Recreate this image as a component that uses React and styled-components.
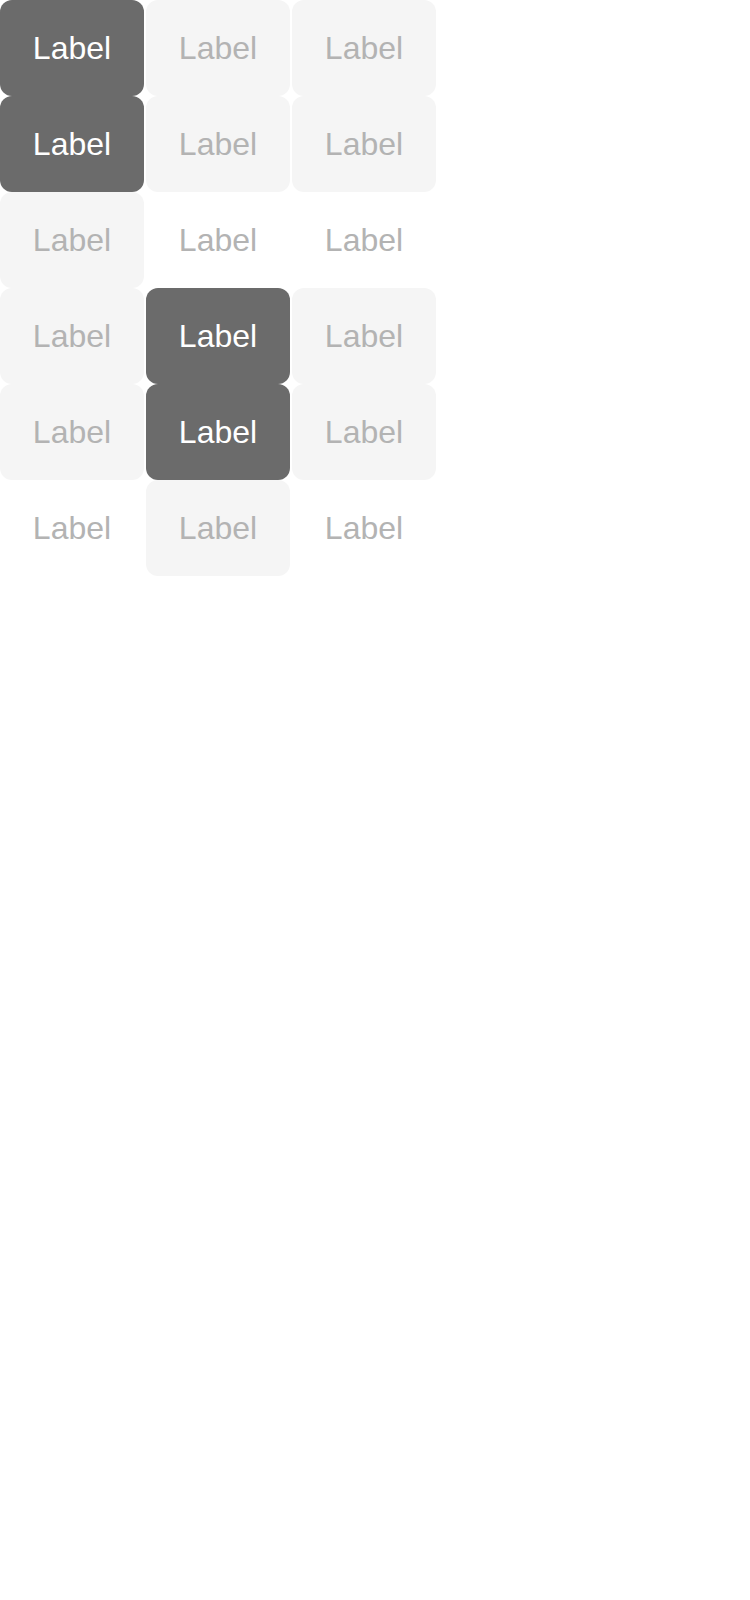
import React from 'react';
import styled, { createGlobalStyle } from 'styled-components';

const GlobalStyle = createGlobalStyle`
  body {
    margin: 0;
    background: #fff;
    font-family: "Liberation Sans", Arial, sans-serif;
  }
`;

const rows = [
  ['active', 'idle', 'idle'],
  ['active', 'idle', 'idle'],
  ['idle', 'plain', 'plain'],
  ['idle', 'active', 'idle'],
  ['idle', 'active', 'idle'],
  ['plain', 'idle', 'plain'],
];

export default function App() {
  return (
    <>
      <GlobalStyle />
      <Grid>
        {rows.flat().map((variant, idx) => (
          <Cell key={idx} variant={variant}>
            Label
          </Cell>
        ))}
      </Grid>
    </>
  );
}

const Grid = styled.div`
  display: grid;
  grid-template-columns: repeat(3, 144px);
  grid-auto-rows: 96px;
  column-gap: 2px;
  row-gap: 0;
`;

const Cell = styled.div`
  display: flex;
  align-items: center;
  justify-content: center;
  border-radius: 12px;
  font-size: 32px;
  background: ${(p) =>
    p.variant === 'active' ? '#6b6b6b' : p.variant === 'idle' ? '#f5f5f5' : 'transparent'};
  color: ${(p) => (p.variant === 'active' ? '#ffffff' : '#b3b3b3')};
`;
